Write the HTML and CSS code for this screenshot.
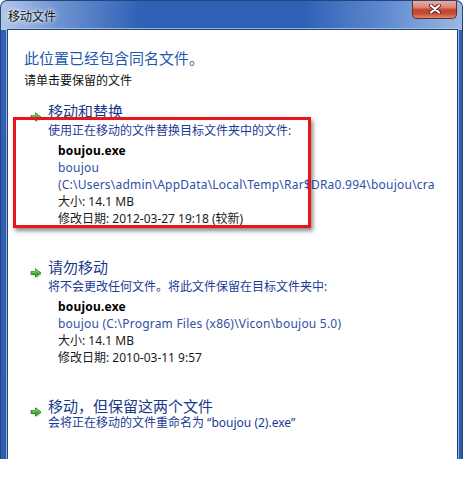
FILE: index.html
```
<!DOCTYPE html>
<html lang="zh-CN">
<head>
<meta charset="utf-8">
<title>移动文件</title>
<link rel="stylesheet" href="styles.css">
</head>
<body>
<div class="window">
  <div class="titlebar">移动文件</div>
  <div class="close">
    <svg width="12" height="10" viewBox="0 0 12 10"><path d="M2 1.5 L10 8.5 M10 1.5 L2 8.5" stroke="#5a2320" stroke-width="4" stroke-linecap="round"/><path d="M2 1.5 L10 8.5 M10 1.5 L2 8.5" stroke="#ffffff" stroke-width="2.2" stroke-linecap="round"/></svg>
  </div>
  <div class="content">
    <div class="main-title">此位置已经包含同名文件。</div>
    <div class="subtitle">请单击要保留的文件</div>

    <div class="link first">
      <svg class="arrow" width="13" height="11" viewBox="0 0 13 11"><path d="M1.5 4 H6 V1 L11.5 5.5 L6 10 V7 H1.5 Z" fill="#c8c8c8" transform="translate(0.8,0.8)" opacity="0.6"/><path d="M1 3.5 H5.5 V0.8 L11 5 L5.5 9.2 V6.5 H1 Z" fill="#3cb02e" stroke="#237a1a" stroke-width="0.8"/><path d="M1.6 4.1 H6.1 V2.2 L9.6 5" fill="none" stroke="#8fe07a" stroke-width="0.8"/></svg>
      <div class="link-body">
        <div class="link-title">移动和替换</div>
        <div class="link-note">使用正在移动的文件替换目标文件夹中的文件:</div>
        <div class="details">
          <div class="fname">boujou.exe</div>
          <div class="path">boujou</div>
          <div class="path clip">(C:\Users\admin\AppData\Local\Temp\Rar$DRa0.994\boujou\cra</div>
          <div class="meta">大小: 14.1 MB</div>
          <div class="meta">修改日期: 2012-03-27 19:18 (较新)</div>
        </div>
      </div>
    </div>

    <div class="link">
      <svg class="arrow" width="13" height="11" viewBox="0 0 13 11"><path d="M1.5 4 H6 V1 L11.5 5.5 L6 10 V7 H1.5 Z" fill="#c8c8c8" transform="translate(0.8,0.8)" opacity="0.6"/><path d="M1 3.5 H5.5 V0.8 L11 5 L5.5 9.2 V6.5 H1 Z" fill="#3cb02e" stroke="#237a1a" stroke-width="0.8"/><path d="M1.6 4.1 H6.1 V2.2 L9.6 5" fill="none" stroke="#8fe07a" stroke-width="0.8"/></svg>
      <div class="link-body">
        <div class="link-title">请勿移动</div>
        <div class="link-note">将不会更改任何文件。将此文件保留在目标文件夹中:</div>
        <div class="details">
          <div class="fname">boujou.exe</div>
          <div class="path">boujou (C:\Program Files (x86)\Vicon\boujou 5.0)</div>
          <div class="meta">大小: 14.1 MB</div>
          <div class="meta">修改日期: 2010-03-11 9:57</div>
        </div>
      </div>
    </div>

    <div class="link">
      <svg class="arrow" width="13" height="11" viewBox="0 0 13 11"><path d="M1.5 4 H6 V1 L11.5 5.5 L6 10 V7 H1.5 Z" fill="#c8c8c8" transform="translate(0.8,0.8)" opacity="0.6"/><path d="M1 3.5 H5.5 V0.8 L11 5 L5.5 9.2 V6.5 H1 Z" fill="#3cb02e" stroke="#237a1a" stroke-width="0.8"/><path d="M1.6 4.1 H6.1 V2.2 L9.6 5" fill="none" stroke="#8fe07a" stroke-width="0.8"/></svg>
      <div class="link-body">
        <div class="link-title">移动，但保留这两个文件</div>
        <div class="link-note tight">会将正在移动的文件重命名为 “boujou (2).exe”</div>
      </div>
    </div>
  </div>
  <div class="highlight"></div>
</div>
</body>
</html>
```
FILE: styles.css
```
html, body {
  margin: 0;
  padding: 0;
  background: #ffffff;
}
body {
  font-family: "Noto Sans", "Noto Sans CJK SC", sans-serif;
  font-size: 12px;
  color: #1a1a1a;
}
.window {
  position: relative;
  width: 461px;
  height: 458px;
  border: 1px solid #24447a;
  border-bottom: none;
  border-radius: 7px 7px 0 0;
  background:
    linear-gradient(to right, rgba(185,205,235,0.95) 0%, rgba(140,170,222,0.7) 12%, rgba(40,90,176,0) 30%, rgba(40,90,176,0) 66%, rgba(120,158,218,0.7) 84%, rgba(165,194,234,0.9) 100%) top / 100% 29px no-repeat,
    linear-gradient(to bottom, #2f62b6 0%, #2c5db1 100%);
  display: flex;
  flex-direction: column;
  overflow: hidden;
}
.titlebar {
  height: 28px;
  flex: none;
  padding-left: 7px;
  line-height: 29px;
  font-size: 12px;
  color: #111;
  text-shadow: 0 0 6px #ffffff, 0 0 3px #ffffff;
  font-family: "Noto Sans CJK SC", sans-serif;
}
.close {
  position: absolute;
  left: 411px;
  top: -1px;
  width: 43px;
  height: 18px;
  border: 1px solid #6a2a26;
  border-top: none;
  border-radius: 0 0 5px 5px;
  background: linear-gradient(to bottom, #eab2aa 0%, #d98878 40%, #c8402f 55%, #c64a38 75%, #dc8a70 100%);
  display: flex;
  align-items: center;
  justify-content: center;
}
.content {
  flex: 1;
  margin: 0 4px 0 6px;
  border: 1px solid #2c4470;
  border-bottom: none;
  background: #ffffff;
  padding: 18px 0 0 16px;
  box-shadow: 0 0 0 1px rgba(170,200,240,0.8);
}
.main-title {
  font-size: 15px;
  line-height: 20px;
  color: #1f58ae;
  font-family: "Noto Sans CJK SC", sans-serif;
}
.subtitle {
  margin-top: 3px;
  line-height: 17px;
  color: #111;
  font-family: "Noto Sans CJK SC", sans-serif;
}
.link {
  display: flex;
  gap: 5px;
  margin-top: 30px;
  padding-left: 6px;
}
.link.first {
  margin-top: 13px;
}
.arrow {
  flex: none;
  margin-top: 11px;
}
.link-body {
  min-width: 0;
}
.link-title {
  font-size: 15px;
  line-height: 20px;
  color: #183a8c;
  font-family: "Noto Sans CJK SC", sans-serif;
}
.link-note {
  margin-top: 1px;
  line-height: 17px;
  color: #1b3a96;
}
.link-note.tight {
  margin-top: -2px;
}
.details {
  margin-top: 3px;
  padding-left: 10px;
}
.details div {
  line-height: 17px;
  white-space: nowrap;
}
.fname {
  font-weight: bold;
  color: #000;
  letter-spacing: 0.2px;
}
.path {
  color: #2f4fa4;
  letter-spacing: 0.22px;
}
.clip {
  width: 377px;
  overflow: hidden;
}
.meta {
  color: #1a1a1a;
}
.highlight {
  position: absolute;
  left: 12px;
  top: 116px;
  width: 292px;
  height: 105px;
  border: 3px solid #e8151b;
  box-shadow: 2px 3px 4px rgba(0,0,0,0.45);
}
```
